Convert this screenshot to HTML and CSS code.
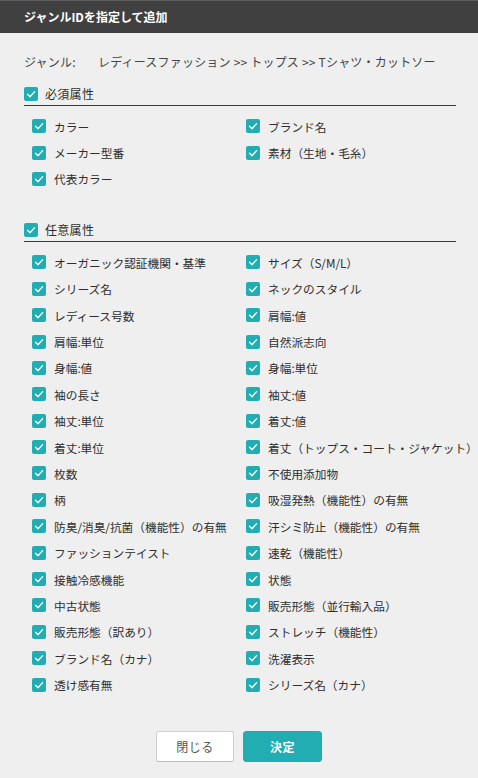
FILE: index.html
```html
<!DOCTYPE html>
<html lang="ja">
<head>
<meta charset="utf-8">
<title>ジャンルIDを指定して追加</title>
<link rel="stylesheet" href="styles.css">
</head>
<body>
<header class="titlebar"><h1 class="title">ジャンルIDを指定して追加</h1></header>
<main class="content">
  <div class="genre"><span class="genre-label">ジャンル:</span><span class="genre-value">レディースファッション &gt;&gt; トップス &gt;&gt; Tシャツ・カットソー</span></div>

  <section class="group">
    <div class="group-head"><span class="cb"><svg viewBox="0 0 14 14"><polyline points="3.5,7.3 6,9.8 10.6,4.6"/></svg></span><span class="group-title">必須属性</span></div>
    <ul class="items">
      <li><span class="cb"><svg viewBox="0 0 14 14"><polyline points="3.5,7.3 6,9.8 10.6,4.6"/></svg></span>カラー</li>
      <li><span class="cb"><svg viewBox="0 0 14 14"><polyline points="3.5,7.3 6,9.8 10.6,4.6"/></svg></span>ブランド名</li>
      <li><span class="cb"><svg viewBox="0 0 14 14"><polyline points="3.5,7.3 6,9.8 10.6,4.6"/></svg></span>メーカー型番</li>
      <li><span class="cb"><svg viewBox="0 0 14 14"><polyline points="3.5,7.3 6,9.8 10.6,4.6"/></svg></span>素材（生地・毛糸）</li>
      <li><span class="cb"><svg viewBox="0 0 14 14"><polyline points="3.5,7.3 6,9.8 10.6,4.6"/></svg></span>代表カラー</li>
    </ul>
  </section>

  <section class="group group-optional">
    <div class="group-head"><span class="cb"><svg viewBox="0 0 14 14"><polyline points="3.5,7.3 6,9.8 10.6,4.6"/></svg></span><span class="group-title">任意属性</span></div>
    <ul class="items">
      <li><span class="cb"><svg viewBox="0 0 14 14"><polyline points="3.5,7.3 6,9.8 10.6,4.6"/></svg></span>オーガニック認証機関・基準</li>
      <li><span class="cb"><svg viewBox="0 0 14 14"><polyline points="3.5,7.3 6,9.8 10.6,4.6"/></svg></span>サイズ（S/M/L）</li>
      <li><span class="cb"><svg viewBox="0 0 14 14"><polyline points="3.5,7.3 6,9.8 10.6,4.6"/></svg></span>シリーズ名</li>
      <li><span class="cb"><svg viewBox="0 0 14 14"><polyline points="3.5,7.3 6,9.8 10.6,4.6"/></svg></span>ネックのスタイル</li>
      <li><span class="cb"><svg viewBox="0 0 14 14"><polyline points="3.5,7.3 6,9.8 10.6,4.6"/></svg></span>レディース号数</li>
      <li><span class="cb"><svg viewBox="0 0 14 14"><polyline points="3.5,7.3 6,9.8 10.6,4.6"/></svg></span>肩幅:値</li>
      <li><span class="cb"><svg viewBox="0 0 14 14"><polyline points="3.5,7.3 6,9.8 10.6,4.6"/></svg></span>肩幅:単位</li>
      <li><span class="cb"><svg viewBox="0 0 14 14"><polyline points="3.5,7.3 6,9.8 10.6,4.6"/></svg></span>自然派志向</li>
      <li><span class="cb"><svg viewBox="0 0 14 14"><polyline points="3.5,7.3 6,9.8 10.6,4.6"/></svg></span>身幅:値</li>
      <li><span class="cb"><svg viewBox="0 0 14 14"><polyline points="3.5,7.3 6,9.8 10.6,4.6"/></svg></span>身幅:単位</li>
      <li><span class="cb"><svg viewBox="0 0 14 14"><polyline points="3.5,7.3 6,9.8 10.6,4.6"/></svg></span>袖の長さ</li>
      <li><span class="cb"><svg viewBox="0 0 14 14"><polyline points="3.5,7.3 6,9.8 10.6,4.6"/></svg></span>袖丈:値</li>
      <li><span class="cb"><svg viewBox="0 0 14 14"><polyline points="3.5,7.3 6,9.8 10.6,4.6"/></svg></span>袖丈:単位</li>
      <li><span class="cb"><svg viewBox="0 0 14 14"><polyline points="3.5,7.3 6,9.8 10.6,4.6"/></svg></span>着丈:値</li>
      <li><span class="cb"><svg viewBox="0 0 14 14"><polyline points="3.5,7.3 6,9.8 10.6,4.6"/></svg></span>着丈:単位</li>
      <li><span class="cb"><svg viewBox="0 0 14 14"><polyline points="3.5,7.3 6,9.8 10.6,4.6"/></svg></span>着丈（トップス・コート・ジャケット）</li>
      <li><span class="cb"><svg viewBox="0 0 14 14"><polyline points="3.5,7.3 6,9.8 10.6,4.6"/></svg></span>枚数</li>
      <li><span class="cb"><svg viewBox="0 0 14 14"><polyline points="3.5,7.3 6,9.8 10.6,4.6"/></svg></span>不使用添加物</li>
      <li><span class="cb"><svg viewBox="0 0 14 14"><polyline points="3.5,7.3 6,9.8 10.6,4.6"/></svg></span>柄</li>
      <li><span class="cb"><svg viewBox="0 0 14 14"><polyline points="3.5,7.3 6,9.8 10.6,4.6"/></svg></span>吸湿発熱（機能性）の有無</li>
      <li><span class="cb"><svg viewBox="0 0 14 14"><polyline points="3.5,7.3 6,9.8 10.6,4.6"/></svg></span>防臭/消臭/抗菌（機能性）の有無</li>
      <li><span class="cb"><svg viewBox="0 0 14 14"><polyline points="3.5,7.3 6,9.8 10.6,4.6"/></svg></span>汗シミ防止（機能性）の有無</li>
      <li><span class="cb"><svg viewBox="0 0 14 14"><polyline points="3.5,7.3 6,9.8 10.6,4.6"/></svg></span>ファッションテイスト</li>
      <li><span class="cb"><svg viewBox="0 0 14 14"><polyline points="3.5,7.3 6,9.8 10.6,4.6"/></svg></span>速乾（機能性）</li>
      <li><span class="cb"><svg viewBox="0 0 14 14"><polyline points="3.5,7.3 6,9.8 10.6,4.6"/></svg></span>接触冷感機能</li>
      <li><span class="cb"><svg viewBox="0 0 14 14"><polyline points="3.5,7.3 6,9.8 10.6,4.6"/></svg></span>状態</li>
      <li><span class="cb"><svg viewBox="0 0 14 14"><polyline points="3.5,7.3 6,9.8 10.6,4.6"/></svg></span>中古状態</li>
      <li><span class="cb"><svg viewBox="0 0 14 14"><polyline points="3.5,7.3 6,9.8 10.6,4.6"/></svg></span>販売形態（並行輸入品）</li>
      <li><span class="cb"><svg viewBox="0 0 14 14"><polyline points="3.5,7.3 6,9.8 10.6,4.6"/></svg></span>販売形態（訳あり）</li>
      <li><span class="cb"><svg viewBox="0 0 14 14"><polyline points="3.5,7.3 6,9.8 10.6,4.6"/></svg></span>ストレッチ（機能性）</li>
      <li><span class="cb"><svg viewBox="0 0 14 14"><polyline points="3.5,7.3 6,9.8 10.6,4.6"/></svg></span>ブランド名（カナ）</li>
      <li><span class="cb"><svg viewBox="0 0 14 14"><polyline points="3.5,7.3 6,9.8 10.6,4.6"/></svg></span>洗濯表示</li>
      <li><span class="cb"><svg viewBox="0 0 14 14"><polyline points="3.5,7.3 6,9.8 10.6,4.6"/></svg></span>透け感有無</li>
      <li><span class="cb"><svg viewBox="0 0 14 14"><polyline points="3.5,7.3 6,9.8 10.6,4.6"/></svg></span>シリーズ名（カナ）</li>
    </ul>
  </section>

  <div class="actions">
    <button class="btn btn-close" type="button">閉じる</button>
    <button class="btn btn-ok" type="button">決定</button>
  </div>
</main>
</body>
</html>
```
FILE: styles.css
```css
* { box-sizing: border-box; }
html, body { margin: 0; padding: 0; }
body {
  background: #efefef;
  color: #2e2e2e;
  font-family: "Noto Sans CJK JP", "Noto Sans", sans-serif;
  font-size: 12px;
  width: 478px;
  height: 778px;
  overflow: hidden;
}
.titlebar {
  height: 33px;
  background: #404040;
  border-top: 1px solid #5c5c5c;
  display: flex;
  align-items: center;
  padding-left: 24px;
}
.title {
  margin: 0;
  font-size: 12px;
  font-weight: bold;
  color: #fff;
  line-height: 20px;
}
.content {
  padding: 19px 22px 0 24px;
}
.genre {
  display: flex;
  line-height: 20px;
  color: #444;
  letter-spacing: 0.2px;
}
.genre-label { width: 74px; }
.group { margin-top: 12px; }
.group-optional { margin-top: 28px; }
.group-head {
  display: flex;
  align-items: center;
  gap: 7px;
  height: 22px;
  padding-bottom: 2px;
  border-bottom: 1px solid #3a3a3a;
  line-height: 20px;
}
.group-title { letter-spacing: 0.3px; }
.cb {
  width: 14px;
  height: 14px;
  flex: none;
  background: #22adb2;
  border-radius: 2px;
  display: inline-flex;
}
.cb svg { width: 14px; height: 14px; }
.cb polyline {
  fill: none;
  stroke: #fff;
  stroke-width: 1.3;
  stroke-linecap: round;
  stroke-linejoin: round;
}
.items {
  list-style: none;
  margin: 7px 0 0;
  padding: 0 0 0 8px;
  display: grid;
  grid-template-columns: 214px 1fr;
  grid-auto-rows: 26.4px;
}
.items li {
  display: flex;
  align-items: center;
  gap: 8px;
  white-space: nowrap;
  font-size: 11.7px;
}
.actions {
  display: flex;
  justify-content: center;
  gap: 9px;
  margin-top: 33px;
  padding-right: 2px;
}
.btn {
  height: 31px;
  border-radius: 3px;
  font-family: inherit;
  font-size: 12px;
  letter-spacing: 0.5px;
  cursor: pointer;
}
.btn-close {
  width: 78px;
  background: #fff;
  border: 1px solid #cfcfcf;
  border-bottom-color: #bdbdbd;
  color: #555;
}
.btn-ok {
  width: 79px;
  background: #22adb2;
  border: 1px solid #22adb2;
  color: #fff;
  font-weight: bold;
}
```
